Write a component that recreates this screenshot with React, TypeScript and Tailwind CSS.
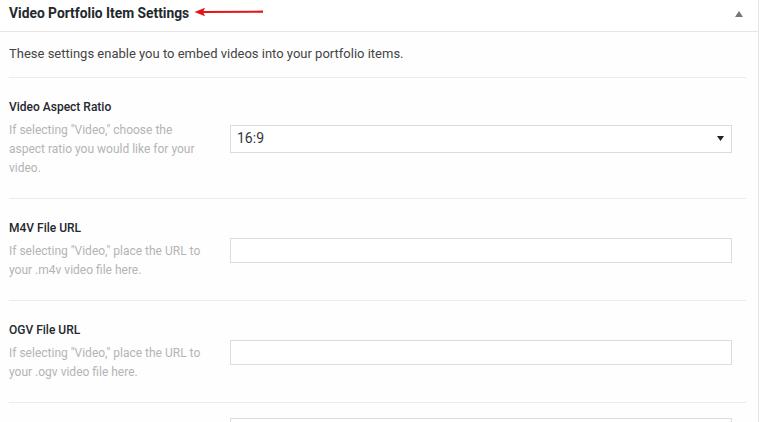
import React from "react";

const fields = [
  {
    label: "Video Aspect Ratio",
    desc: 'If selecting "Video," choose the aspect ratio you would like for your video.',
    kind: "select",
  },
  {
    label: "M4V File URL",
    desc: 'If selecting "Video," place the URL to your .m4v video file here.',
    kind: "input",
  },
  {
    label: "OGV File URL",
    desc: 'If selecting "Video," place the URL to your .ogv video file here.',
    kind: "input",
  },
];

const App = () => {
  return (
    <div className="w-[759px] h-[422px] overflow-hidden bg-white font-['Roboto',sans-serif]">
      <div className="border-r border-[#e5e5e5] h-full bg-[#fefefe]">
        {/* HEADER */}
        <div className="h-[32px] border-b border-[#e6e6e6] bg-white flex items-start pl-[9px] pr-[14px] pt-[4px]">
          <h3 className="text-[13.8px] leading-[18px] font-bold text-[#23282d]">
            Video Portfolio Item Settings
          </h3>
          <svg width="72" height="10" viewBox="0 0 72 10" className="ml-[5px] mt-[3px]">
            <path d="M0.5 5 L11 0.8 L9.5 4 L69 3.6 L69 5.8 L9.5 6 L11 9.2 Z" fill="#e3151a" />
          </svg>
          <div className="flex-1" />
          <svg width="8" height="6" viewBox="0 0 8 6" className="mt-[7px] mr-[1px]">
            <path d="M0 6 L4 0 L8 6 Z" fill="#72777c" />
          </svg>
        </div>

        {/* BODY */}
        <div className="pl-[9px] pr-[12px]">
          <p className="text-[13px] leading-[20px] text-[#444] pt-[12px] pb-[13px] border-b border-[#ececec]">
            These settings enable you to embed videos into your portfolio items.
          </p>

          {fields.map((f) => (
            <div
              key={f.label}
              className="flex items-center border-b border-[#ececec] pt-[21px] pb-[20px] pr-[14px]"
            >
              <div className="w-[195px] mr-[26px]">
                <div className="text-[12px] leading-[16px] font-medium text-[#23282d] mb-[6px]">
                  {f.label}
                </div>
                <div className="text-[12px] leading-[19px] text-[#b4b4b4]">{f.desc}</div>
              </div>
              <div className="flex-1">
                {f.kind === "select" ? (
                  <div className="h-[28px] border border-[#dcdcdc] bg-white flex items-center pl-[6px] pr-[7px]">
                    <span className="text-[14px] text-[#32373c] flex-1">16:9</span>
                    <svg width="7" height="5" viewBox="0 0 7 5">
                      <path d="M0 0 L7 0 L3.5 5 Z" fill="#222" />
                    </svg>
                  </div>
                ) : (
                  <input
                    type="text"
                    className="block w-full h-[25px] border border-[#dcdcdc] bg-white outline-none"
                  />
                )}
              </div>
            </div>
          ))}

          <div className="flex items-start pt-[15px] pr-[14px]">
            <div className="w-[195px] mr-[26px]" />
            <textarea className="flex-1 h-[80px] border border-[#dcdcdc] bg-white resize-none" />
          </div>
        </div>
      </div>
    </div>
  );
};

export default App;
